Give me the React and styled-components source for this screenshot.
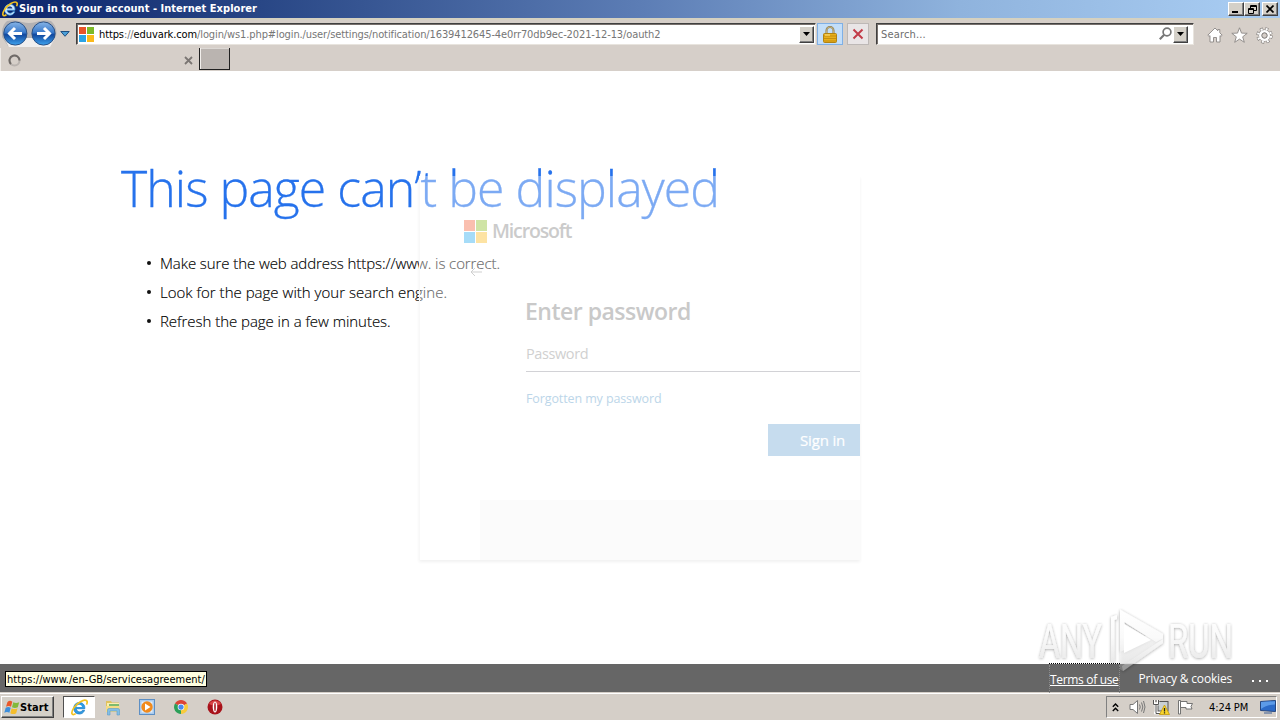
import React from 'react';
import styled, { createGlobalStyle } from 'styled-components';

const GlobalStyle = createGlobalStyle`
  body {
    margin: 0;
    background: #fff;
    overflow: hidden;
  }

  * {
    box-sizing: border-box;
  }

  svg {
    display: block;
    flex: none;
  }
`;

const tahoma = `Tahoma, 'DejaVu Sans Condensed', 'DejaVu Sans', sans-serif`;
const segoe = `'Open Sans', 'Noto Sans', sans-serif`;

const Screen = styled.div`
  display: flex;
  flex-direction: column;
  width: 1280px;
  height: 720px;
  position: relative;
  overflow: hidden;
  font-family: ${tahoma};
  font-size: 11px;
  color: #000;
  white-space: nowrap;
`;

/* ---------- window chrome ---------- */

const TitleBar = styled.div`
  display: flex;
  align-items: center;
  flex: none;
  height: 18px;
  padding: 0 2px 0 2px;
  background: linear-gradient(90deg, #0b256b 0%, #284685 20%, #5c7db5 50%, #8fb3dd 75%, #a6caf0 96%);
`;

const Title = styled.div`
  flex: 1;
  margin-left: 1px;
  color: #fff;
  font-weight: bold;
  line-height: 18px;
  letter-spacing: 0.035px;
`;

const raised = `
  background: #d4d0c8;
  border: 1px solid;
  border-color: #fff #404040 #404040 #fff;
  box-shadow: inset -1px -1px 0 #808080;
`;

const WindowButton = styled.div`
  ${raised}
  display: flex;
  align-items: center;
  justify-content: center;
  width: 16px;
  height: 14px;
  margin-left: ${({ $gap }) => ($gap ? '2px' : '0')};
`;

const Toolbar = styled.div`
  display: flex;
  align-items: center;
  flex: none;
  height: 30px;
  padding: 0 7px 0 2px;
  background: #d6cfc9;
  border-top: 2px solid #d5d1c0;
`;

const HistoryDrop = styled.div`
  display: flex;
  justify-content: center;
  width: 19px;
  padding-right: 3px;
`;

const Field = styled.div`
  display: flex;
  align-items: center;
  width: ${({ $width }) => $width}px;
  height: 22px;
  padding-left: 2px;
  padding-right: ${({ $end }) => $end || 1}px;
  margin-left: ${({ $gap }) => $gap || 0}px;
  background: #fff;
  border: 1px solid;
  border-color: #404040 #e8e4de #e8e4de #404040;
  box-shadow: inset 1px 1px 0 #77706c;
`;

const Url = styled.div`
  flex: 1;
  margin-left: 5px;
  padding-top: 1px;
  line-height: 20px;
  color: #767676;
  letter-spacing: -0.11px;

  b {
    font-weight: normal;
    color: #000;
  }
`;

const Placeholder = styled.div`
  flex: 1;
  margin-left: 2px;
  padding-top: 1px;
  line-height: 20px;
  color: #6d6d6d;
  letter-spacing: 0.17px;
`;

const DropButton = styled.div`
  ${raised}
  display: flex;
  align-items: center;
  justify-content: center;
  width: 15px;
  height: 17px;
`;

const BarButton = styled.div`
  display: flex;
  align-items: center;
  justify-content: center;
  width: ${({ $width }) => $width}px;
  height: 22px;
  margin-left: ${({ $gap }) => $gap}px;
  background: ${({ $on }) => ($on ? '#c3def9' : '#e9e5e6')};
  border: 1px solid ${({ $on }) => ($on ? '#7fb0e6' : '#bdb8b6')};
`;

const Tools = styled.div`
  display: flex;
  align-items: center;
  justify-content: space-between;
  flex: 1;
  margin: 2px 0 0 13px;
`;

const TabRow = styled.div`
  display: flex;
  flex: none;
  height: 23px;
  background: #d6cfc9;
`;

const Tab = styled.div`
  display: flex;
  align-items: center;
  justify-content: space-between;
  width: 199px;
  height: 23px;
  padding: 1px 6px 0 7px;
  border-left: 1px solid #efebe7;
`;

const NewTab = styled.div`
  width: 31px;
  height: 22px;
  background: #bab4b0;
  border: solid;
  border-width: 0 1px 1px 1px;
  border-color: #202020;
  box-shadow: inset 1px 0 0 #f2efec, inset 0 1px 0 #dcd8d4;
`;

/* ---------- page ---------- */

const Page = styled.div`
  position: relative;
  flex: 1;
  padding: 87px 0 0 121px;
  background: #fff;
  font-family: ${segoe};
`;

const Heading = styled.h1`
  margin: 0;
  height: 60px;
  line-height: 60px;
  font-size: 50px;
  font-weight: 300;
  letter-spacing: -0.965px;
  color: #2672ec;
  -webkit-text-stroke: 0.3px #2672ec;
`;

const Hints = styled.ul`
  margin: 30px 0 0;
  padding: 0 0 0 26px;
  list-style: none;
`;

const Hint = styled.li`
  display: flex;
  align-items: center;
  height: 29px;
  font-size: 15px;
  font-weight: 300;
  color: #000;
  letter-spacing: ${({ $spacing }) => $spacing}px;
  -webkit-text-stroke: 0.15px #000;

  &::before {
    content: '';
    width: 4px;
    height: 4px;
    margin-right: 9px;
    border-radius: 50%;
    background: #111;
  }
`;

/* login card, half faded out over the error page */
const Card = styled.div`
  position: absolute;
  left: 419px;
  top: 105px;
  display: flex;
  flex-direction: column;
  width: 441px;
  height: 384px;
  background: rgba(255, 255, 255, 0.4);
  border-left: 1px solid #f8f8f8;
  box-shadow: 0 2px 3px rgba(0, 0, 0, 0.06);
`;

const Brand = styled.div`
  display: flex;
  align-items: center;
  height: 24px;
  margin: 43px 0 0 44px;
  font-size: 19.5px;
  font-weight: 600;
  line-height: 24px;
  letter-spacing: -1.15px;
  color: #cbcbcb;

  svg {
    margin-right: 5px;
  }
`;

const Back = styled.div`
  height: 12px;
  margin: 23px 0 0 49px;
`;

const Form = styled.div`
  display: flex;
  flex-direction: column;
  padding-left: 105px;
`;

const FormTitle = styled.div`
  height: 32px;
  margin-top: 17px;
  line-height: 32px;
  font-size: 23px;
  font-weight: 600;
  letter-spacing: -0.5px;
  color: #c9c9c9;
`;

const PasswordField = styled.div`
  height: 36px;
  margin-top: 9px;
  margin-left: 1px;
  line-height: 35px;
  font-size: 14.5px;
  letter-spacing: -0.4px;
  color: #d0d0d0;
  border-bottom: 1px solid #d2d2d6;
`;

const Forgot = styled.div`
  height: 20px;
  margin-top: 17px;
  padding-left: 1px;
  line-height: 20px;
  font-size: 12.5px;
  letter-spacing: -0.11px;
  color: #bcd6e9;
`;

const SignIn = styled.div`
  align-self: flex-end;
  width: 92px;
  height: 32px;
  margin-top: 15px;
  padding-left: 32px;
  line-height: 32px;
  font-size: 15px;
  letter-spacing: -0.17px;
  color: #fff;
  background: #c6dcee;
  -webkit-text-stroke: 0.2px #fff;
`;

const CardFoot = styled.div`
  height: 60px;
  margin: auto 0 0 60px;
  background: #fbfbfb;
`;

const Footer = styled.div`
  display: flex;
  align-items: center;
  flex: none;
  height: 28px;
  padding: 1px 12px 0 5px;
  background: #666;
  font-family: ${segoe};
  font-size: 12px;
  color: #fff;
`;

const StatusTip = styled.div`
  height: 16px;
  margin: 1px auto 0 0;
  padding: 0 1px;
  line-height: 15px;
  font-family: ${tahoma};
  font-size: 11px;
  letter-spacing: 0.005px;
  color: #000;
  background: #ffffe1;
  border: 1px solid #000;
`;

const Terms = styled.span`
  position: relative;
  height: 28px;
  margin-right: 19px;
  line-height: 29px;
  letter-spacing: -0.32px;
  text-decoration: underline;
  border: dotted #8c8c8c;
  border-width: 0 1px;
  margin-left: -1px;

  /* top edge of the focus rectangle sticks out above the footer */
  &::before {
    content: '';
    position: absolute;
    left: -1px;
    right: -1px;
    top: -2px;
    border-top: 1px dotted #000;
  }
`;

const Privacy = styled.span`
  margin-right: 20px;
  letter-spacing: -0.18px;
  line-height: 29px;
`;

const Dots = styled.span`
  display: flex;
  gap: 5px;
  margin-top: 4px;

  i {
    width: 2px;
    height: 2px;
    background: #fff;
  }
`;

const Watermark = styled.svg`
  position: absolute;
  left: 1030px;
  top: 600px;
`;

/* ---------- taskbar ---------- */

const Taskbar = styled.div`
  display: flex;
  align-items: center;
  flex: none;
  height: 28px;
  padding: 1px 3px 0 1px;
  background: #d5cfc8;
  border-top: 1px solid #d5cfc8;
  box-shadow: inset 0 1px 0 #fff;
`;

const StartButton = styled.div`
  ${raised}
  display: flex;
  align-items: center;
  width: 53px;
  height: 22px;
  padding-left: 2px;
  font-weight: bold;
  letter-spacing: 0.1px;
`;

const TaskItem = styled.div`
  display: flex;
  align-items: center;
  justify-content: center;
  width: 34px;
  height: 22px;
`;

const ActiveTask = styled(TaskItem)`
  width: 32px;
  margin-left: 9px;
  margin-right: 1px;
  background: #fff;
  border: 1px solid;
  border-color: #505050 #fff #fff #505050;
`;

const Tray = styled.div`
  display: flex;
  align-items: center;
  width: 171px;
  height: 22px;
  margin-left: auto;
  padding: 0;
  padding-left: 5px;
  border: 1px solid;
  border-color: #808080 #fff #fff #808080;
`;

const Clock = styled.span`
  margin: 0 12px 0 15px;
  letter-spacing: -0.1px;
`;

const TrayIcon = styled.span`
  margin-left: ${({ $gap }) => $gap || 0}px;
`;

/* ---------- icons ---------- */

const IeIcon = ({ size = 16, light }) => (
  <svg width={size} height={size} viewBox="0 0 18 18" fill="none">
    <path
      d="M14.6 10.300H5.600c.2 3.500 5 4.600 6.600 1.700h2.200c-1 2.600-3 3.900-5.500 3.900-3.600 0-6-2.600-6-6.200 0-3.500 2.500-6 5.900-6 3.800 0 6.200 2.800 5.800 6.600z"
      fill={light ? '#cfeaff' : '#2f9be2'}
      stroke={light ? '#3d9be0' : '#1d7dc4'}
      strokeWidth="0.8"
    />
    <path d="M5.700 8.400c.4-2.900 5.500-3 6 0z" fill={light ? '#1c3c82' : '#fff'} />
    <path d="M5 15.500C.8 18.400-.5 14.800 2.800 9.700 6.500 4 13.700-.2 16.300 1.600c1.200.9.9 2.700.1 4.300" stroke="#f2c21f" strokeWidth="1.800" />
  </svg>
);

const FourSquares = ({ size, gap, colors }) => {
  const s = (size - gap) / 2;
  return (
    <svg width={size} height={size}>
      <rect width={s} height={s} fill={colors[0]} />
      <rect x={s + gap} width={s} height={s} fill={colors[1]} />
      <rect y={s + gap} width={s} height={s} fill={colors[2]} />
      <rect x={s + gap} y={s + gap} width={s} height={s} fill={colors[3]} />
    </svg>
  );
};

const NavButtons = () => (
  <svg width="55" height="28" viewBox="0 0 55 28">
    <defs>
      <linearGradient id="orb" x1="0" y1="0" x2="0" y2="1">
        <stop offset="0" stopColor="#86b4e6" />
        <stop offset="0.45" stopColor="#3b7acb" />
        <stop offset="0.55" stopColor="#11489f" />
        <stop offset="1" stopColor="#3fa3ee" />
      </linearGradient>
    </defs>
    <path d="M5 1Q13-1 20 2Q27 4 34 2Q42-1 49 1Q56 7 54 16L48 26H6L0 17Q-1 6 5 1z" fill="#b3b1b3" />
    <path d="M2 18h51l-5 9H7z" fill="#f1efee" />
    <circle cx="13.300" cy="13.500" r="11.600" fill="url(#orb)" stroke="#2b5287" />
    <circle cx="41.500" cy="13.500" r="11.600" fill="url(#orb)" stroke="#2b5287" />
    <path d="M20 13.500H8.500M13 8l-5.500 5.500L13 19" fill="none" stroke="#fff" strokeWidth="3" />
    <path d="M35 13.500h11.500M42 8l5.500 5.500L42 19" fill="none" stroke="#fff" strokeWidth="3" />
  </svg>
);

const DownArrow = () => (
  <svg width="7" height="4">
    <path d="M0 0h7L3.500 4z" fill="#000" />
  </svg>
);

const LockIcon = () => (
  <svg width="14" height="17" viewBox="0 0 14 17">
    <path d="M3.500 8V4.500a3.500 3.500 0 0 1 7 0V8" fill="none" stroke="#8c7b4c" strokeWidth="2" />
    <path d="M3.500 8V4.500a3.500 3.500 0 0 1 7 0V8" fill="none" stroke="#d8c795" strokeWidth="0.700" />
    <rect x="0.500" y="7.500" width="13" height="9" rx="1" fill="#e8b01b" stroke="#b18312" />
    <path d="M1 10h12M1 12.500h12M1 15h12" stroke="#c18b10" strokeWidth="0.900" />
    <path d="M2 9h5" stroke="#ffe58a" />
  </svg>
);

const StopIcon = () => (
  <svg width="12" height="12" viewBox="0 0 12 12">
    <path d="M1.500 1.500l9 9M10.500 1.500l-9 9" stroke="#c23b48" strokeWidth="2" />
  </svg>
);

const SearchIcon = () => (
  <svg width="14" height="14" viewBox="0 0 14 14" fill="none" stroke="#777">
    <circle cx="8" cy="5" r="3.900" strokeWidth="1.700" />
    <path d="M5.200 7.800L.8 12.200" strokeWidth="2.200" />
  </svg>
);

const HomeIcon = () => (
  <svg width="16" height="16" viewBox="0 0 16 16">
    <path
      d="M8 1L.8 8.200l1.300 1.200.9-.8V15h3.500v-4.500h3V15H13V8.600l.9.8 1.300-1.200L12.800 5.800V2.500h-2v1.300z"
      fill="#fff"
      stroke="#8b8785"
      strokeWidth="0.900"
    />
  </svg>
);

const StarIcon = () => (
  <svg width="17" height="16" viewBox="0 0 17 16">
    <path d="M8.500.8l2 5.300 5.700.2-4.500 3.500 1.600 5.500-4.800-3.200-4.800 3.200 1.600-5.500L.8 6.300l5.700-.2z" fill="#fff" stroke="#8b8785" strokeWidth="0.900" />
  </svg>
);

const GearIcon = () => (
  <svg width="17" height="17" viewBox="0 0 17 17">
    <circle cx="8.500" cy="8.500" r="6.500" fill="none" stroke="#85817f" strokeWidth="3.400" strokeDasharray="2.900 2.205" />
    <circle cx="8.500" cy="8.500" r="5.900" fill="#85817f" />
    <circle cx="8.500" cy="8.500" r="6.500" fill="none" stroke="#fff" strokeWidth="2.200" strokeDasharray="1.900 3.205" strokeDashoffset="-0.500" />
    <circle cx="8.500" cy="8.500" r="4.200" fill="none" stroke="#fff" strokeWidth="2.600" />
    <circle cx="8.500" cy="8.500" r="2.600" fill="#d6cfc9" stroke="#85817f" strokeWidth="0.900" />
  </svg>
);

const StartFlag = () => (
  <svg width="16" height="15" viewBox="0 0 16 15">
    <path d="M3.500 2Q6-.2 8.300 1.800L7 6.800Q4.800 5 2 6.800z" fill="#e9582a" />
    <path d="M9.300 2.200Q12 3.800 15.200 2.200L13.800 7.200Q11 8.800 8 7.200z" fill="#83b93a" />
    <path d="M1.700 7.800Q4.300 6 6.700 7.800L5.400 12.800Q3 11 .3 12.800z" fill="#3d8edb" />
    <path d="M7.700 8.200Q10.500 9.900 13.500 8.200L12.200 13.200Q9.500 15 6.300 13.200z" fill="#f5bd2b" />
  </svg>
);

const FolderIcon = () => (
  <svg width="16" height="17" viewBox="0 0 16 17">
    <path d="M1 2h5l1 1.500h7V13H1z" fill="#e0c25e" />
    <path d="M2 4h12v8H2z" fill="#fbeeb0" />
    <path d="M4 5h10v2H4z" fill="#7dbb70" />
    <path d="M1 7h13.500v6H1z" fill="#f4dc85" />
    <path d="M2.500 16v-5q0-1.500 1.500-1.500h9q1.500 0 1.500 1.500v5H12v-4H5v4z" fill="#83bfe6" stroke="#5c9bc9" strokeWidth="0.600" />
  </svg>
);

const MediaIcon = () => (
  <svg width="16" height="16" viewBox="0 0 16 16">
    <rect x="0.500" y="0.500" width="15" height="15" fill="#a9cbee" stroke="#5d8fc4" />
    <rect x="2.500" y="2.500" width="11" height="11" fill="#e4eef8" />
    <circle cx="8" cy="8" r="5.700" fill="#f18a1c" />
    <path d="M6 4.500l5.500 3.500L6 11.500z" fill="#fff" />
  </svg>
);

const ChromeIcon = () => (
  <svg width="14" height="14" viewBox="0 0 16 16">
    <path d="M8 8L1.100 4A8 8 0 0 1 14.900 4z" fill="#dc4437" />
    <path d="M8 8L14.900 4A8 8 0 0 1 8 16z" fill="#f8cb3c" />
    <path d="M8 8L8 16A8 8 0 0 1 1.100 4z" fill="#2c9f58" />
    <circle cx="8" cy="8" r="3.800" fill="#fff" />
    <circle cx="8" cy="8" r="3" fill="#4a8af0" />
  </svg>
);

const OperaIcon = () => (
  <svg width="16" height="16" viewBox="0 0 16 16">
    <circle cx="8" cy="8" r="7.500" fill="#a8121a" />
    <path d="M2 5a7 7 0 0 1 12 0Q8 8 2 5z" fill="#d84446" />
    <ellipse cx="8" cy="8" rx="2.300" ry="5.600" fill="#fff" />
    <ellipse cx="8" cy="8" rx="0.800" ry="4.400" fill="#a8121a" />
  </svg>
);

const SpeakerIcon = () => (
  <svg width="17" height="16" viewBox="0 0 17 16" fill="none" stroke="#777" strokeWidth="1">
    <path d="M1 5.500h3L8.500 1.500v13L4 10.500H1z" fill="#fff" />
    <path d="M10.500 5.500q1.500 2.500 0 5M12.500 3.500q2.700 4.500 0 9M14.500 2q3 6 0 12" />
  </svg>
);

const NetworkIcon = () => (
  <svg width="17" height="16" viewBox="0 0 17 16">
    <rect x="5" y="2.500" width="10" height="9.500" fill="#c9d0d3" stroke="#555" />
    <path d="M1 1v4h4V1M3 5v9M1 14h7" fill="none" stroke="#fff" strokeWidth="2.600" />
    <path d="M.5 1v4.500h5V1M3 5.500v9h5M3 1v2" fill="none" stroke="#555" />
    <path d="M11.500 6l5 9.500h-10z" fill="#f9d52b" stroke="#c49a0a" strokeWidth="0.800" />
    <path d="M11.500 9v3.500M11.500 13.300v1.200" stroke="#222" strokeWidth="1.300" />
  </svg>
);

const FlagIcon = () => (
  <svg width="17" height="16" viewBox="0 0 17 16">
    <path d="M1.500 1.500h2v13.500h-2z" fill="#fff" stroke="#666" strokeWidth="0.900" />
    <path d="M3.500 2.500h6.500v2h5.500l-1.500 3 1 2.500H9V8.500H3.500z" fill="#fff" stroke="#666" strokeWidth="0.900" />
  </svg>
);

const DesktopIcon = () => (
  <svg width="16" height="14" viewBox="0 0 16 14">
    <path d="M.5 1.500L15.500.5v11l-15-1z" fill="#2c6bc8" stroke="#26477f" />
    <path d="M1 2l14-.8v3.300Q6 5 1 9z" fill="#5c9be8" />
    <path d="M4 13h8" stroke="#3b5d92" />
  </svg>
);

const AnyRunMark = () => (
  <Watermark width="240" height="80" viewBox="0 0 240 80">
    <defs>
      <filter id="soft" x="-10%" y="-10%" width="120%" height="120%">
        <feDropShadow dx="0" dy="0.600" stdDeviation="1.500" floodColor="#000" floodOpacity="0.450" />
      </filter>
      <linearGradient id="fade" gradientUnits="userSpaceOnUse" x1="0" y1="12" x2="0" y2="72">
        <stop offset="0" stopColor="#fff" />
        <stop offset="0.400" stopColor="#fafafa" />
        <stop offset="0.850" stopColor="#e4e4e4" />
        <stop offset="0.880" stopColor="#a8a8a8" />
      </linearGradient>
    </defs>
    <g filter="url(#soft)" opacity="0.800" fontFamily="Roboto, sans-serif" fontSize="49" fill="url(#fade)">
      <text x="9" y="58" textLength="63" lengthAdjust="spacingAndGlyphs">ANY</text>
      <text x="138" y="58" textLength="65" lengthAdjust="spacingAndGlyphs">RUN</text>
      <path d="M90 9.500l43 24.500v4.500L126 42 94.500 22v28l-4.500 2z" />
      <path d="M94 46l28-13 11 2v4L93 71l-3-2V52z" fillOpacity="0.450" />
      <path d="M94 24l27 16-27 13z" fill="#fff" />
      <path d="M81 17l6-2v4l-2.500 1V61L81 63z" />
      <path d="M92 66l41-27v4L93 71z" />
    </g>
  </Watermark>
);

const App = () => (
  <Screen>
    <GlobalStyle />
    <TitleBar>
      <IeIcon size={16} light />
      <Title>Sign in to your account - Internet Explorer</Title>
      <WindowButton>
        <svg width="8" height="8">
          <path d="M0 6h6v2H0z" />
        </svg>
      </WindowButton>
      <WindowButton>
        <svg width="9" height="9" fill="none" stroke="#000">
          <path d="M2.500 3V.5h6v5H6M2 1.500h7M.5 3.500h5v5h-5zM0 4.500h6" />
        </svg>
      </WindowButton>
      <WindowButton $gap>
        <svg width="8" height="8">
          <path d="M.5.5l7 7M7.500.5l-7 7" stroke="#000" strokeWidth="1.700" />
        </svg>
      </WindowButton>
    </TitleBar>

    <Toolbar>
      <NavButtons />
      <HistoryDrop>
        <svg width="10" height="6">
          <path d="M.8.500h8.400L5 5.300z" fill="#4ba0d8" stroke="#1f4f80" />
        </svg>
      </HistoryDrop>
      <Field $width={740}>
        <FourSquares size={15} gap={1} colors={['#e8532a', '#7db928', '#2ba3e4', '#fbb91a']} />
        <Url>
          <b>https</b>://<b>eduvark.com</b>
          /login/ws1.php#login./user/settings/notification/1639412645-4e0rr70db9ec-2021-12-13/oauth2
        </Url>
        <DropButton>
          <DownArrow />
        </DropButton>
      </Field>
      <BarButton $width={26} $gap={1} $on>
        <LockIcon />
      </BarButton>
      <BarButton $width={22} $gap={4}>
        <StopIcon />
      </BarButton>
      <Field $width={318} $gap={7} $end={5}>
        <Placeholder>Search...</Placeholder>
        <SearchIcon />
        <DropButton>
          <DownArrow />
        </DropButton>
      </Field>
      <Tools>
        <HomeIcon />
        <StarIcon />
        <GearIcon />
      </Tools>
    </Toolbar>

    <TabRow>
      <Tab>
        <svg width="13" height="13" fill="none" strokeWidth="2">
          <circle cx="6.500" cy="6.500" r="5" stroke="#b9b3af" />
          <path d="M3 10A5 5 0 0 1 5 1.700a5 5 0 0 1 6.500 4.800" stroke="#6f6a67" />
        </svg>
        <svg width="9" height="9">
          <path d="M1 1l7 7M8 1l-7 7" stroke="#7b7673" strokeWidth="1.800" />
        </svg>
      </Tab>
      <NewTab />
    </TabRow>

    <Page>
      <Heading>This page can’t be displayed</Heading>
      <Hints>
        <Hint $spacing={-0.084}>Make sure the web address https://www. is correct.</Hint>
        <Hint $spacing={0.014}>Look for the page with your search engine.</Hint>
        <Hint $spacing={-0.04}>Refresh the page in a few minutes.</Hint>
      </Hints>
      <Card>
        <Brand>
          <FourSquares size={23} gap={1} colors={['#fabfaf', '#cfe4a5', '#a6dcf8', '#fde3a3']} />
          Microsoft
        </Brand>
        <Back>
          <svg width="13" height="12" fill="none" stroke="#cfcfcf">
            <path d="M13 6H2M6 2L2 6l4 4" />
          </svg>
        </Back>
        <Form>
          <FormTitle>Enter password</FormTitle>
          <PasswordField>Password</PasswordField>
          <Forgot>Forgotten my password</Forgot>
          <SignIn>Sign in</SignIn>
        </Form>
        <CardFoot />
      </Card>
    </Page>

    <Footer>
      <StatusTip>https://www./en-GB/servicesagreement/</StatusTip>
      <Terms>Terms of use</Terms>
      <Privacy>Privacy &amp; cookies</Privacy>
      <Dots>
        <i />
        <i />
        <i />
      </Dots>
    </Footer>

    <Taskbar>
      <StartButton>
        <StartFlag />
        Start
      </StartButton>
      <ActiveTask>
        <IeIcon size={17} />
      </ActiveTask>
      <TaskItem>
        <FolderIcon />
      </TaskItem>
      <TaskItem>
        <MediaIcon />
      </TaskItem>
      <TaskItem>
        <ChromeIcon />
      </TaskItem>
      <TaskItem>
        <OperaIcon />
      </TaskItem>
      <Tray>
        <svg width="7" height="9" fill="none" stroke="#000" strokeWidth="1.400">
          <path d="M.8 3.800l2.700-2.700 2.700 2.700M.8 8l2.700-2.700L6.200 8" />
        </svg>
        <TrayIcon $gap={10}>
          <SpeakerIcon />
        </TrayIcon>
        <TrayIcon $gap={7}>
          <NetworkIcon />
        </TrayIcon>
        <TrayIcon $gap={7}>
          <FlagIcon />
        </TrayIcon>
        <Clock>4:24 PM</Clock>
        <DesktopIcon />
      </Tray>
    </Taskbar>
    <AnyRunMark />
  </Screen>
);

export default App;
